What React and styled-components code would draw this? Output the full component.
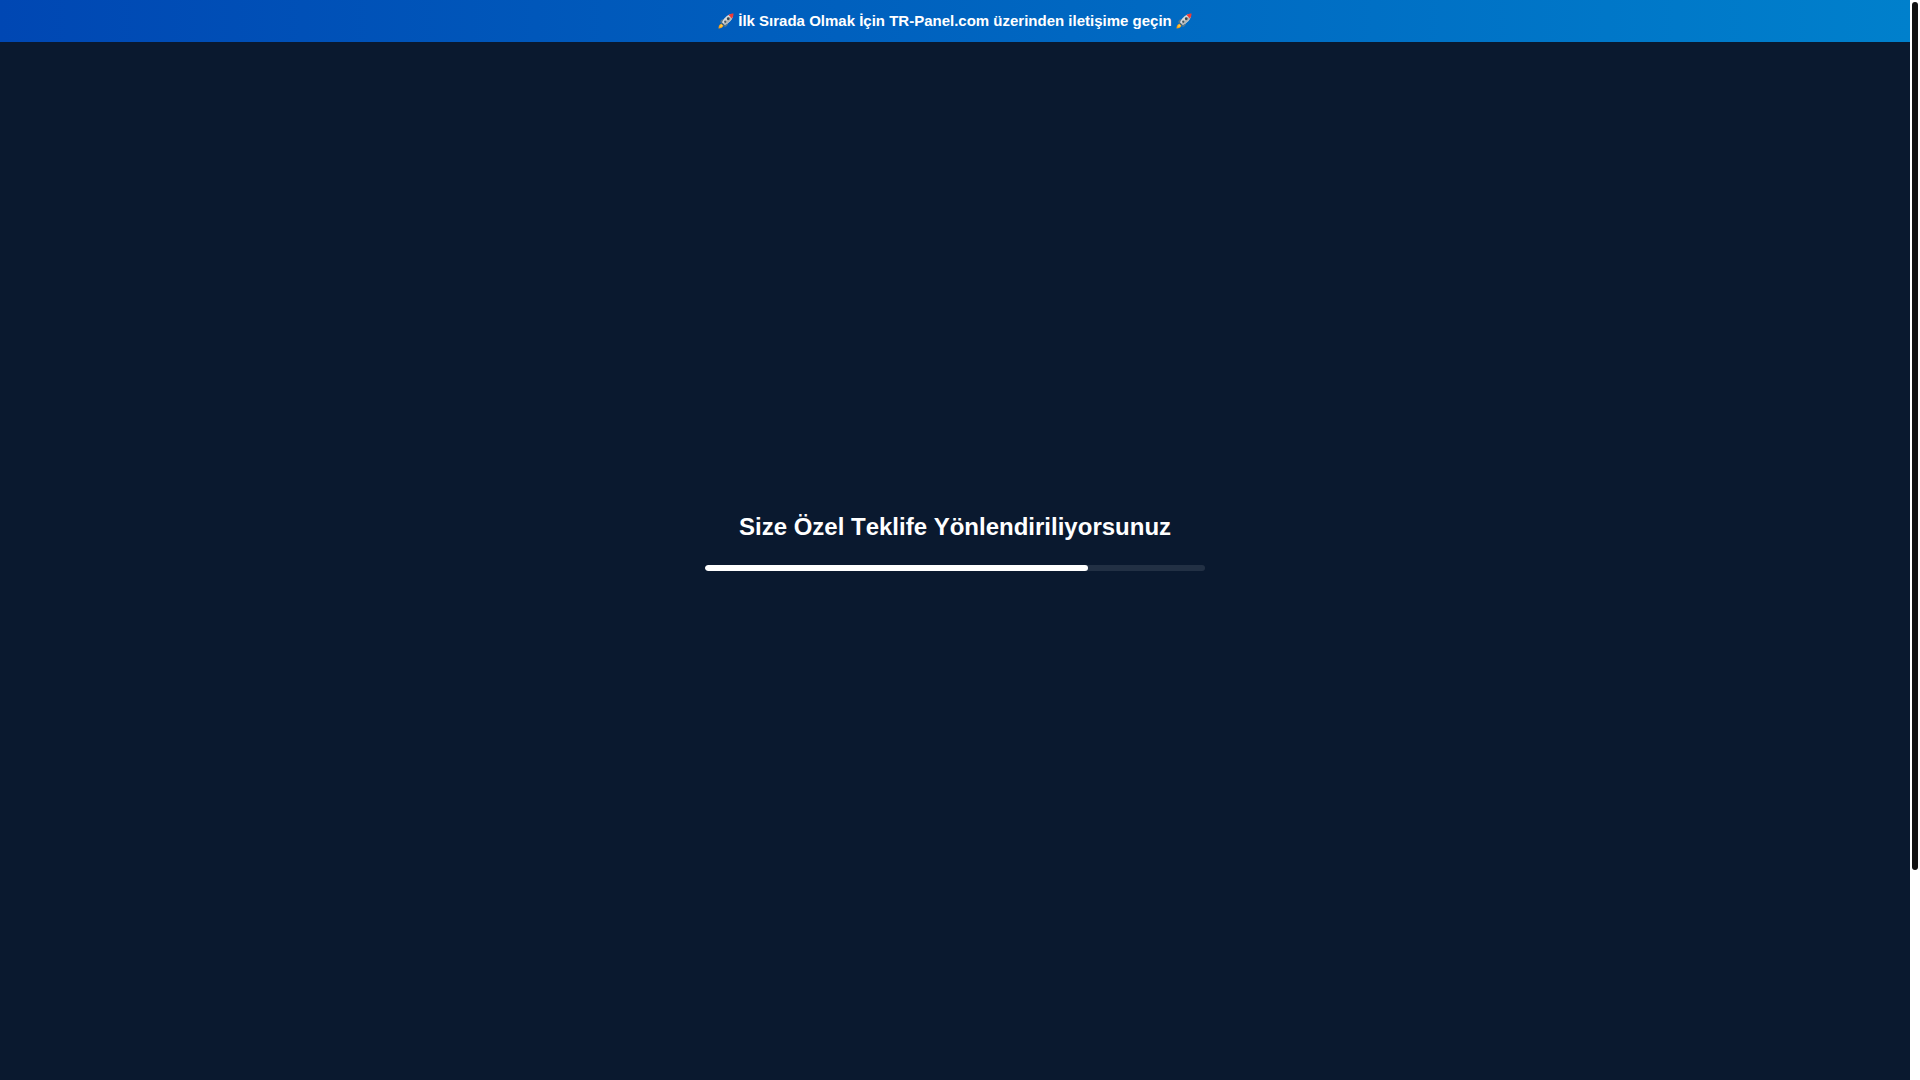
import React from "react";
import styled, { createGlobalStyle } from "styled-components";

const PROGRESS = 76.6;

const Rocket = () => (
  <RocketIcon viewBox='0 0 32 32' aria-hidden='true'>
    <path d='M7 21c-4 1-6 5-6 10 5 0 9-2 10-6z' fill='#f9a11b' />
    <path d='M7.500 22.500c-2 1-3 3-3.500 5.500 2.500-.5 4.500-1.500 5.500-3.500z' fill='#ffd54a' />
    <path d='M13 12c-5 0-8 2-9 7l6 1zM20 19c0 5-2 8-7 9l-1-6z' fill='#56788f' />
    <path d='M8 19C11 11 18 4 26 2l4 4c-2 8-9 15-17 18z' fill='#d9dbdc' />
    <path d='M13 24l-2.500-2.500L28 4l2 2c-2 8-9 15-17 18z' fill='#b4b8ba' />
    <path d='M21 4c3-2 6-3 10-3 0 4-1 7-3 10z' fill='#ee3b36' />
    <path d='M8 19l5 5-3 1-3-3z' fill='#4f6675' />
    <circle cx='20.500' cy='11.500' r='2.800' fill='#37474f' />
    <circle cx='14.500' cy='17.500' r='2.300' fill='#455a64' />
  </RocketIcon>
);

const App = () => {
  return (
    <>
      <GlobalStyle />
      <Page>
        <Content>
          <Banner>
            <Rocket /> İlk Sırada Olmak İçin TR-Panel.com üzerinden iletişime geçin <Rocket />
          </Banner>
          <Redirect>
            <Title>Size Özel Teklife Yönlendiriliyorsunuz</Title>
            <Track
              role='progressbar'
              aria-label='Yönlendirme'
              aria-valuemin={0}
              aria-valuemax={100}
              aria-valuenow={PROGRESS}
            >
              <Fill style={{ width: `${PROGRESS}%` }} />
            </Track>
          </Redirect>
        </Content>
        <ScrollTrack aria-hidden='true'>
          <ScrollThumb />
        </ScrollTrack>
      </Page>
    </>
  );
};

const GlobalStyle = createGlobalStyle`
  * {
    margin: 0;
    padding: 0;
    box-sizing: border-box;
  }
  body {
    background-color: #0a192f;
    font-family: "Liberation Sans", Arial, sans-serif;
    color: white;
  }
`;

const Page = styled.div`
  display: flex;
  height: 100vh;
`;

const Content = styled.div`
  flex: 1;
  min-width: 0;
  display: flex;
  flex-direction: column;
`;

const Banner = styled.header`
  padding: 10px 20px;
  background: linear-gradient(90deg, #0047b3, #0080cc);
  font-size: 15px;
  font-weight: bold;
  line-height: 22px;
  text-align: center;
`;

const RocketIcon = styled.svg`
  width: 16px;
  height: 16px;
  vertical-align: text-bottom;
`;

const Redirect = styled.main`
  flex: 1;
  display: flex;
  flex-direction: column;
  align-items: center;
  justify-content: center;
  gap: 20px;
  padding: 0 20px 42px;
`;

const Title = styled.h1`
  font-size: 24px;
  line-height: 36px;
  font-kerning: none;
  text-align: center;
`;

const Track = styled.div`
  width: 100%;
  max-width: 500px;
  height: 6px;
  border-radius: 3px;
  background-color: rgba(255, 255, 255, 0.1);
  overflow: hidden;
`;

const Fill = styled.div`
  height: 100%;
  border-radius: 3px;
  background-color: white;
`;

const ScrollTrack = styled.div`
  width: 10px;
  padding: 2px;
  background-color: white;
`;

const ScrollThumb = styled.div`
  height: 80.7%;
  border-radius: 3px;
  background-color: #111111;
`;

export default App;
